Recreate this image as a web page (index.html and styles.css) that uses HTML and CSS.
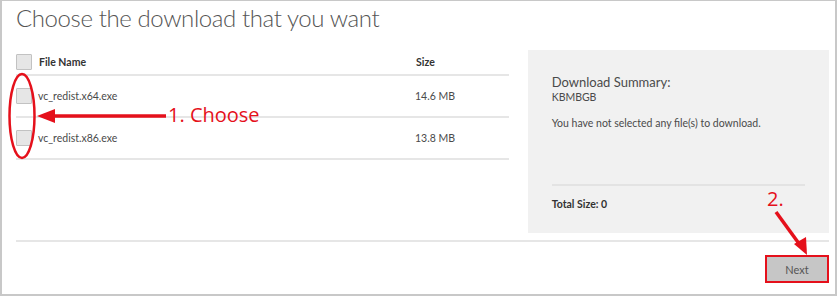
FILE: index.html
```html
<!DOCTYPE html>
<html lang="en">
  <head>
    <meta charset="UTF-8" />
    <title>Choose the download</title>
    <link rel="stylesheet" href="styles.css">
  </head>
  <body>
    <div class="frame">
      <h1 class="titulo">Choose the download that you want</h1>

      <div class="conteudo">
        <div class="arquivos">
          <div class="linha cabecalho">
            <span class="caixa"></span>
            <span class="nome">File Name</span>
            <span class="tamanho">Size</span>
          </div>
          <div class="linha">
            <span class="caixa"></span>
            <span class="nome">vc_redist.x64.exe</span>
            <span class="tamanho">14.6 MB</span>
          </div>
          <div class="linha">
            <span class="caixa"></span>
            <span class="nome">vc_redist.x86.exe</span>
            <span class="tamanho">13.8 MB</span>
          </div>
        </div>

        <div class="resumo">
          <div class="resumo-titulo">Download Summary:</div>
          <div class="resumo-kb">KBMBGB</div>
          <p class="resumo-texto">You have not selected any file(s) to download.</p>
          <div class="resumo-total">Total Size: 0</div>
        </div>
      </div>

      <div class="rodape">
        <button class="botao-next">Next</button>
      </div>

      <svg class="anotacoes" width="840" height="296" viewBox="0 0 840 296">
        <ellipse cx="22" cy="116" rx="12.5" ry="42" fill="none" stroke="#e5101b" stroke-width="2.5" />
        <line x1="166" y1="116" x2="52" y2="116" stroke="#e5101b" stroke-width="3.5" />
        <polygon points="37,116 55,109 55,123" fill="#e5101b" />
        <text x="168" y="122" class="anot-texto">1. Choose</text>
        <text x="767" y="206" class="anot-texto">2.</text>
        <line x1="776" y1="212" x2="800" y2="245" stroke="#e5101b" stroke-width="3.5" />
        <polygon points="807,255 794,244 806,237" fill="#e5101b" />
      </svg>
    </div>
  </body>
</html>
```

FILE: styles.css
```css
body {
  margin: 0;
  font-family: Lato, "Open Sans", Arial, sans-serif;
  color: #4a4a4a;
  background: #fff;
}

.frame {
  position: relative;
  width: 837px;
  height: 296px;
  box-sizing: border-box;
  border: 2px solid #c8c8c8;
  border-top-width: 1px;
  padding: 0 6px 0 14px;
}

.titulo {
  margin: 0;
  padding-top: 2px;
  font-size: 24px;
  font-weight: 300;
  line-height: 30px;
  letter-spacing: -0.4px;
  color: #555;
}

.conteudo {
  display: flex;
  margin-top: 17px;
  height: 183px;
}

.arquivos {
  width: 494px;
}

.linha {
  display: flex;
  align-items: center;
  height: 40px;
  border-bottom: 2px solid #e6e6e6;
  font-size: 10.5px;
}

.cabecalho {
  height: 24px;
  font-weight: 700;
  color: #333;
}

.caixa {
  width: 14px;
  height: 14px;
  border: 1px solid #c2c2c2;
  background: #e6e6e6;
  border-radius: 1px;
  flex-shrink: 0;
}

.nome {
  margin-left: 7px;
  width: 377px;
}

.linha:not(.cabecalho) .nome {
  margin-left: 6px;
}

.resumo {
  width: 302px;
  margin-left: 19px;
  background: #f1f1f1;
  padding: 25px 24px 0 24px;
  box-sizing: border-box;
  font-size: 10.5px;
}

.resumo-titulo {
  font-size: 13px;
  line-height: 15px;
  color: #4a4a4a;
}

.resumo-kb {
  font-size: 10.5px;
  line-height: 14px;
}

.resumo-texto {
  margin: 12px 0 0;
  line-height: 14px;
}

.resumo-total {
  margin-top: 54px;
  border-top: 2px solid #e3e3e3;
  padding-top: 12px;
  font-weight: 700;
  color: #333;
}

.rodape {
  margin-top: 7px;
  border-top: 2px solid #e6e6e6;
  display: flex;
  justify-content: flex-end;
  padding-top: 13px;
}

.botao-next {
  width: 64px;
  height: 28px;
  background: #c6c6c6;
  border: 2px solid #e5101b;
  font-family: Lato, "Open Sans", Arial, sans-serif;
  font-size: 11px;
  color: #555;
  padding: 0;
}

.anotacoes {
  position: absolute;
  top: -1px;
  left: -2px;
  pointer-events: none;
}

.anot-texto {
  font-family: "Open Sans", Arial, sans-serif;
  font-size: 20px;
  fill: #e5101b;
}
```
